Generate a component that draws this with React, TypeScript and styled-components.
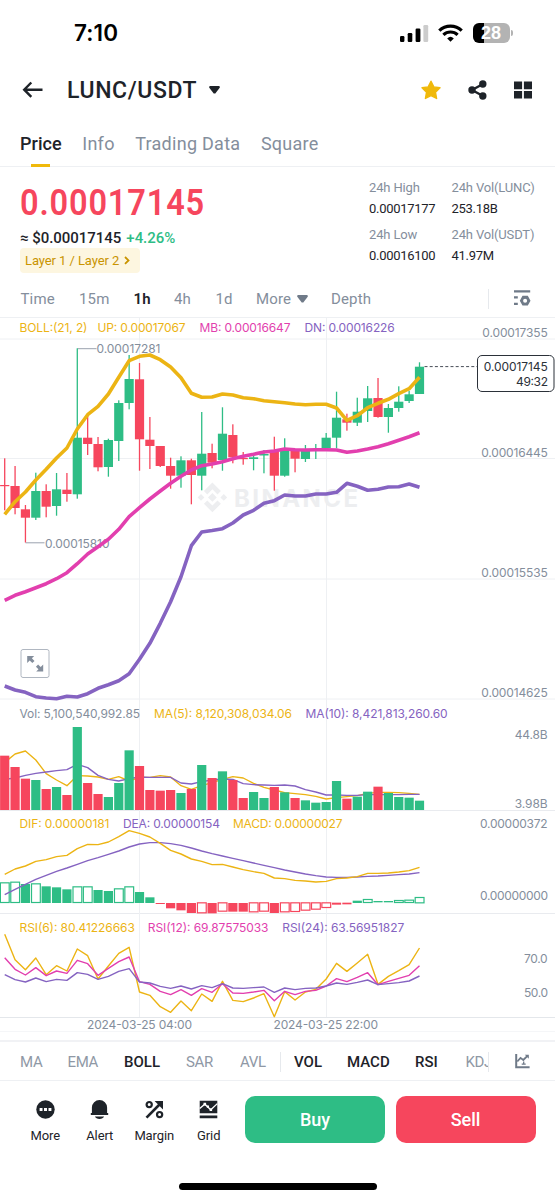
import React from "react";
import styled, { createGlobalStyle } from "styled-components";

const C = {
  ink: "#1e2329",
  gray: "#848e9c",
  line: "#eef0f3",
  green: "#2ebd85",
  red: "#f6465d",
  yellow: "#ecb414",
  pink: "#e23fae",
  purple: "#8563c1",
};

const Global = createGlobalStyle`
  * { box-sizing: border-box; }
  body { margin: 0; background: #fff; }
`;

const Screen = styled.main`
  width: 555px;
  height: 1200px;
  overflow: hidden;
  background: #fff;
  color: ${C.ink};
  font-family: Roboto, "Liberation Sans", sans-serif;
  display: flex;
  flex-direction: column;
`;

const StatusBar = styled.header`
  height: 66px;
  flex: none;
  padding: 0 42px 0 74px;
  display: flex;
  align-items: center;
  justify-content: space-between;
`;
const Clock = styled.span`
  font: 580 22.5px/24px Inter, sans-serif;
  color: #000;
  letter-spacing: 0.1px;
`;
const StatusIcons = styled.div`
  display: flex;
  align-items: center;
  height: 20px;
`;
const Battery = styled.div`
  width: 37px;
  height: 19.5px;
  margin-left: 10px;
  border-radius: 6px;
  background: linear-gradient(90deg, #000 10.5px, #b3b3b3 10.5px);
  color: #fff;
  text-align: center;
  font: 700 18px/20px "Liberation Sans", sans-serif;
`;
const BatteryTip = styled.i`
  width: 2px;
  height: 6px;
  margin-left: 1.5px;
  border-radius: 0 2px 2px 0;
  background: #b3b3b3;
`;

const TitleBar = styled.div`
  height: 48px;
  flex: none;
  padding: 0 23px 0 22px;
  display: flex;
  align-items: center;
`;
const Pair = styled.h1`
  margin: 2px 11.5px 0 24px;
  font-size: 23px;
  line-height: 28px;
  font-weight: 550;
  letter-spacing: 0.6px;
`;
const TitleActions = styled.div`
  margin-left: auto;
  display: flex;
  align-items: center;
  gap: 26.8px;
`;

const Tabs = styled.nav`
  height: 53px;
  flex: none;
  padding: 18px 20px 0;
  display: flex;
  gap: 20.5px;
  border-bottom: 1px solid ${C.line};
`;
const Tab = styled.span<{ $active?: boolean }>`
  height: 35px;
  font-size: 18px;
  line-height: 23px;
  font-weight: ${(p) => (p.$active ? 500 : 440)};
  letter-spacing: ${(p) => (p.$active ? 0.05 : 0.27)}px;
  color: ${(p) => (p.$active ? C.ink : C.gray)};
  display: flex;
  flex-direction: column;
  align-items: center;
  justify-content: space-between;
  &::after {
    content: "";
    width: 19px;
    height: 3.5px;
    background: ${(p) => (p.$active ? "#f0b90b" : "transparent")};
  }
`;

const Ticker = styled.section`
  height: 115px;
  flex: none;
  display: flex;
  padding: 10px 19px 0 20px;
  justify-content: space-between;
`;
const PriceColumn = styled.div`
  display: flex;
  flex-direction: column;
  align-items: flex-start;
`;
const LastPrice = styled.strong`
  font-size: 37px;
  line-height: 52px;
  font-weight: 600;
  letter-spacing: 0.95px;
  transform: scaleX(0.88);
  transform-origin: left center;
  color: ${C.red};
`;
const Fiat = styled.span`
  font-size: 15px;
  line-height: 18px;
  font-weight: 480;
  letter-spacing: -0.03px;
`;
const Change = styled.span`
  margin-left: 5px;
  color: ${C.green};
`;
const Tag = styled.span`
  margin-top: 1px;
  width: 120px;
  height: 25px;
  padding: 0 5px;
  border-radius: 4px;
  background: #fdf6e0;
  color: #c99400;
  font-size: 13px;
  letter-spacing: -0.08px;
  display: flex;
  align-items: center;
  gap: 4.5px;
  white-space: nowrap;
`;
const Stats = styled.dl`
  margin: 0;
  width: 167px;
  display: grid;
  grid-template-columns: 82.5px 1fr;
  grid-template-rows: 47px 47px;
`;
const Stat = styled.div`
  white-space: nowrap;
  font-size: 13px;
`;
const StatLabel = styled.dt`
  line-height: 22px;
  letter-spacing: -0.15px;
  color: ${C.gray};
`;
const StatValue = styled.dd`
  margin: 0;
  line-height: 20px;
  font-weight: 450;
  letter-spacing: -0.3px;
`;

const Periods = styled.nav`
  height: 35px;
  flex: none;
  padding: 0 24px 2px 20.5px;
  display: flex;
  align-items: center;
`;
const Period = styled.span<{ $w: number; $active?: boolean }>`
  flex: 0 0 ${(p) => p.$w}px;
  display: flex;
  align-items: center;
  gap: 6px;
  font-size: 15px;
  letter-spacing: 0.15px;
  font-weight: ${(p) => (p.$active ? 650 : 400)};
  color: ${(p) => (p.$active ? C.ink : C.gray)};
`;
const Divider = styled.i<{ $right?: number }>`
  width: 1px;
  height: 20px;
  margin-right: ${(p) => p.$right ?? 0}px;
  background: #e6e9ed;
`;

const Panel = styled.svg`
  display: block;
  flex: none;
  font-family: Inter, "Liberation Sans", sans-serif;
  font-size: 12px;
`;

const Indicators = styled.nav`
  height: 41px;
  flex: none;
  padding: 1px 24px 0 20px;
  border-top: 2px solid #f1f2f5;
  border-bottom: 1px solid ${C.line};
  display: flex;
  align-items: center;
`;
const Indicator = styled.span<{ $w: number; $active?: boolean }>`
  flex: 0 0 ${(p) => p.$w}px;
  overflow: hidden;
  font-size: 15px;
  line-height: 20px;
  letter-spacing: ${(p) => (p.$active ? 0 : -0.35)}px;
  font-weight: ${(p) => (p.$active ? 500 : 400)};
  color: ${(p) => (p.$active ? C.ink : "#8f98a5")};
`;

const ActionBar = styled.footer`
  flex: none;
  height: 62px;
  padding: 15px 19.5px 0 18px;
  display: flex;
`;
const Action = styled.div`
  width: 54.5px;
  display: flex;
  flex-direction: column;
  align-items: center;
  padding-top: 4px;
  gap: 7px;
  font-size: 13px;
  line-height: 20px;
  letter-spacing: -0.1px;

  svg {
    flex: none;
  }
`;
const TradeButton = styled.button<{ $sell?: boolean }>`
  width: 140px;
  height: 47px;
  margin-left: ${(p) => (p.$sell ? 10.5 : 9)}px;
  padding: 0;
  border: 0;
  border-radius: 10px;
  background: ${(p) => (p.$sell ? C.red : C.green)};
  color: #fff;
  font: 480 18px/24px Roboto, sans-serif;
`;
const HomeIndicator = styled.i`
  margin: 40px 0 0 178.5px;
  width: 198.5px;
  height: 7px;
  border-radius: 4px;
  background: #000;
`;

/* ---------- chart data, in chart pixel units ---------- */

const STEP = 10.37;
const cx = (i: number) => 4.7 + STEP * i;

// [colour, body top, body bottom, wick top, wick bottom]
type Candle = ["g" | "r", number, number, number, number];
const candles: Candle[] = [
  ["r", 485, 486.2, 458.3, 510.3], ["r", 486, 508, 466, 514.3], ["r", 509.3, 517.7, 505, 542.5],
  ["g", 491, 517.7, 472.7, 520], ["r", 491, 506.7, 484.3, 517.3], ["g", 489.3, 506, 473, 515.7],
  ["r", 489.7, 494, 473, 501.7], ["g", 437.7, 494.3, 348.3, 498.7], ["r", 437.7, 444, 416, 455],
  ["r", 444, 467.3, 437, 471.3], ["g", 440, 467, 438.7, 476.7], ["g", 403, 441, 400.3, 461],
  ["g", 379, 403, 355, 409.3], ["r", 379.3, 439.3, 363, 470.7], ["r", 439.7, 446, 417, 469],
  ["r", 446, 466, 446, 467], ["r", 466, 475.7, 457.7, 488.7], ["g", 460.3, 475.7, 456.3, 487.7],
  ["r", 460.3, 475, 458.7, 504.3], ["g", 453.7, 475.7, 412, 490.3], ["r", 453, 462.7, 443.7, 468.3],
  ["g", 433.7, 460, 407.3, 470.7], ["r", 435, 457.3, 424.3, 463.3], ["r", 458, 459.2, 452, 464.7],
  ["g", 457.3, 459, 454, 470.3], ["g", 454, 455.5, 450, 473.3], ["r", 450.7, 475.7, 436.7, 490.7],
  ["g", 450.7, 475.7, 438.3, 476.7], ["r", 450.7, 458.7, 450, 472.3], ["g", 450.7, 459, 445, 462],
  ["g", 449.5, 450.7, 444, 459], ["g", 437.7, 448.3, 433, 449.3], ["g", 417.7, 437.7, 391.7, 448.3],
  ["r", 419.3, 422.7, 413.7, 430.7], ["g", 411.7, 422.7, 397.7, 426], ["g", 398.3, 411, 386, 422],
  ["r", 398, 417, 378, 417.7], ["g", 408, 417, 404, 432.7], ["g", 401.7, 408, 386.3, 411.7],
  ["g", 394.3, 401, 390.7, 403], ["g", 366.7, 394, 362.3, 394],
];

const upper = [514.3, 501.7, 492, 480, 469.3, 458, 448, 429, 414.7, 406.3, 394, 377.3, 360.7, 356.3, 355, 359.7, 367, 377.7, 393.3, 397.3, 397, 394, 395, 397.7, 398.7, 400.7, 401.7, 402.7, 404, 404.7, 404.3, 404.3, 408, 420.3, 415.7, 407.7, 403.3, 399.3, 393.7, 388.7, 377.3];
const middle = [600.3, 595.3, 591.7, 587.7, 583.7, 578.7, 572.7, 563.7, 554, 546.7, 539.3, 529.3, 516.7, 507.7, 499, 491, 483.3, 476.3, 470, 465.7, 464, 461.7, 458.7, 456.3, 454.3, 452, 451, 449, 449.7, 450, 449.7, 449.7, 450, 452.3, 451, 449, 446.7, 443.7, 440.3, 436.7, 432.7];
const lower = [686, 690, 692.3, 696.7, 698, 698.7, 696.3, 697, 693.7, 688.3, 684.7, 680.7, 673.7, 659.3, 643.3, 623.3, 601.7, 576.7, 545.7, 532, 530.5, 528.7, 523, 515, 510.3, 503.3, 500.7, 495, 496, 496, 494, 494, 492.3, 483.3, 486.3, 490.3, 489.3, 487, 486.7, 484, 487.3];

// Lower panels are stored in thirds of a pixel from the panel's own origin.
const third = (origin: number, v: number[]) => v.map((n) => origin + n / 3);

const volume = third(700, [167, 201, 236, 240, 267, 261, 285, 81, 249, 282, 291, 249, 151, 198, 270, 272, 270, 279, 267, 195, 234, 214, 240, 294, 276, 294, 261, 277, 294, 301, 308, 306, 243, 296, 290, 275, 260, 279, 291, 293, 302]);
const volMa5 = third(700, [187, 162, 153, 180, 221, 240, 257, 227, 228, 231, 238, 230, 243, 232, 232, 227, 231, 257, 268, 257, 248, 238, 230, 234, 250, 262, 270, 278, 281, 284, 289, 297, 293, 290, 287, 280, 277, 277, 278, 280, 283]);
const volMa10 = third(700, [238, 234, 226, 220, 216, 212, 209, 193, 203, 226, 238, 243, 236, 231, 232, 232, 232, 249, 252, 245, 240, 237, 238, 251, 254, 255, 256, 255, 258, 269, 276, 285, 285, 286, 286, 284, 284, 284, 284, 283, 283]);

const dif = third(810, [193, 177, 168, 154, 149, 140, 136, 116, 103, 104, 96, 80, 62, 70, 81, 100, 121, 132, 147, 154, 164, 163, 171, 179, 185, 190, 204, 206, 211, 213, 216, 214, 206, 204, 200, 190, 190, 189, 186, 182, 172]);
const dea = third(810, [254, 238, 223, 208, 196, 184, 174, 163, 152, 143, 133, 123, 111, 102, 98, 98, 101, 106, 114, 123, 131, 138, 145, 152, 159, 166, 173, 180, 186, 192, 197, 201, 202, 202, 201, 199, 198, 196, 194, 192, 188]);

// [top, bottom, hollow]
type Hist = [number, number, 0 | 1];
const hist: Hist[] = [
  [217, 279, 1], [215, 279, 1], [222, 279, 0], [220, 279, 1], [229, 279, 0], [232, 279, 0], [238, 279, 0],
  [229, 279, 1], [229, 279, 1], [240, 279, 0], [243, 279, 0], [235, 279, 1], [229, 279, 1], [246, 279, 0],
  [262, 279, 0], [279, 282, 0], [279, 295, 0], [279, 301, 0], [279, 309, 0], [277, 310, 1], [279, 310, 0],
  [277, 305, 1], [279, 305, 0], [279, 305, 0], [277, 307, 1], [277, 305, 1], [279, 309, 0], [277, 307, 1],
  [277, 306, 1], [277, 302, 1], [277, 299, 1], [277, 294, 1], [278, 284, 0], [278, 283, 0], [272, 279, 0],
  [267, 279, 1], [273, 277, 0], [273, 277, 0], [270, 279, 1], [269, 279, 1], [261, 280, 1],
];

const rsi6 = third(915, [58, 134, 164, 129, 179, 152, 168, 102, 122, 192, 153, 115, 97, 231, 241, 275, 292, 258, 287, 237, 259, 199, 256, 260, 249, 236, 305, 230, 255, 231, 223, 192, 145, 169, 144, 118, 208, 184, 167, 149, 99]);
const rsi12 = third(915, [128, 163, 180, 158, 182, 168, 175, 136, 146, 181, 160, 140, 126, 200, 208, 229, 239, 224, 241, 221, 232, 206, 234, 235, 231, 226, 257, 229, 239, 229, 226, 213, 191, 200, 187, 173, 209, 199, 190, 181, 152]);
const rsi24 = third(915, [179, 194, 201, 189, 200, 193, 196, 173, 178, 193, 184, 169, 161, 201, 204, 214, 220, 213, 222, 212, 218, 206, 219, 220, 218, 216, 232, 219, 224, 220, 219, 213, 204, 208, 202, 195, 209, 206, 203, 198, 183]);

/* ---------- chart parts ---------- */

const Series = ({ data, color, w = 1.4 }: { data: number[]; color: string; w?: number }) => (
  <polyline
    points={data.map((y, i) => `${cx(i).toFixed(2)},${y.toFixed(2)}`).join(" ")}
    fill="none"
    stroke={color}
    strokeWidth={w}
    strokeLinejoin="round"
  />
);

const Label = ({ x, x2, y, fill = C.gray, children }: { x: number; x2: number; y: number; fill?: string; children: string }) => (
  <text x={x} y={y} textLength={x2 - x} fill={fill}>
    {children}
  </text>
);

const VLines = ({ y1, y2 }: { y1: number; y2: number }) => (
  <path d={`M139.5 ${y1}V${y2}M326.5 ${y1}V${y2}`} stroke={C.line} fill="none" />
);

const tone = (i: number) => (candles[i][0] === "g" ? C.green : C.red);

const PriceChart = () => (
  <Panel width="555" height="387" viewBox="0 317 555 387">
    <path d="M0 317.5H555M0 339H555M0 458.5H555M0 579H555M0 699H555" stroke={C.line} fill="none" />
    <VLines y1={317} y2={704} />
    <g fill="#edeef0">
      <path d="M212.4 482.5l8.5 8.5-3.4 3.4-5.1-5.1-5.1 5.1-3.4-3.4zM212.4 512.3l8.5-8.5-3.4-3.4-5.1 5.1-5.1-5.1-3.4 3.4zM212.4 493l4.4 4.4-4.4 4.4-4.4-4.4zM201 494l3.4 3.4-3.4 3.4-3.4-3.4zM223.8 494l3.4 3.4-3.4 3.4-3.4-3.4z" />
      <text x="234" y="506.7" fontSize="24" fontWeight="700" textLength="124">BINANCE</text>
    </g>
    <path d="M77.5 348.7H96.5M25.5 542.8H44.5" stroke="#9aa2ae" fill="none" />
    <Label x={96.5} x2={160.5} y={353.4}>0.00017281</Label>
    <Label x={45} x2={109.5} y={547.9}>0.00015810</Label>
    {candles.map(([, top, bottom, hi, lo], i) => (
      <g key={i} fill={tone(i)}>
        <rect x={cx(i) - 0.65} y={hi} width="1.3" height={lo - hi} />
        <rect x={cx(i) - 4.6} y={top} width="9.2" height={bottom - top} />
      </g>
    ))}
    <Series data={upper} color={C.yellow} w={3.6} />
    <Series data={middle} color={C.pink} w={3.6} />
    <Series data={lower} color={C.purple} w={3.6} />
    <path d="M424.5 366.6H477" stroke="#474d57" strokeDasharray="3 2.2" fill="none" />
    <rect x="477.5" y="355.5" width="76.5" height="36" rx="4.5" fill="#fff" stroke="#2b3139" />
    <Label x={483.7} x2={547.8} y={371.4} fill="#2b3139">0.00017145</Label>
    <Label x={516} x2={548} y={385.8} fill="#2b3139">49:32</Label>
    <Label x={19.5} x2={87.5} y={332} fill={C.yellow}>BOLL:(21, 2)</Label>
    <Label x={97.5} x2={185.5} y={332} fill={C.yellow}>UP: 0.00017067</Label>
    <Label x={199.5} x2={290.5} y={332} fill={C.pink}>MB: 0.00016647</Label>
    <Label x={304.5} x2={394.7} y={332} fill={C.purple}>DN: 0.00016226</Label>
    <Label x={482.3} x2={547.8} y={336.8}>0.00017355</Label>
    <Label x={481.3} x2={547.8} y={457}>0.00016445</Label>
    <Label x={481.3} x2={547.8} y={577}>0.00015535</Label>
    <Label x={481.3} x2={547.8} y={697}>0.00014625</Label>
    <rect x="21" y="649.5" width="28" height="28" rx="2" fill="#fff" stroke="#b0b7c1" />
    <g fill={C.gray}>
      <path d="M27.2 656h7l-2.3 2.3 2.6 2.6-2.2 2.2-2.6-2.6-2.5 2.5zM43.2 671.6h-7l2.3-2.3-2.6-2.6 2.2-2.2 2.6 2.6 2.5-2.5z" />
    </g>
  </Panel>
);

const VolumeChart = () => (
  <Panel width="555" height="106" viewBox="0 704 555 106">
    <VLines y1={704} y2={810} />
    <Series data={volMa5} color={C.yellow} />
    <Series data={volMa10} color={C.purple} />
    {volume.map((y, i) => (
      <rect key={i} x={cx(i) - 4.6} y={y} width="9.2" height={810 - y} fill={tone(i)} />
    ))}
    <Label x={19.5} x2={140} y={718.3}>Vol: 5,100,540,992.85</Label>
    <Label x={154} x2={292} y={718.3} fill={C.yellow}>MA(5): 8,120,308,034.06</Label>
    <Label x={305.5} x2={447.7} y={718.3} fill={C.purple}>MA(10): 8,421,813,260.60</Label>
    <Label x={514.7} x2={547.6} y={739}>44.8B</Label>
    <Label x={514.7} x2={547.6} y={807.8}>3.98B</Label>
  </Panel>
);

const MacdChart = () => (
  <Panel width="555" height="104" viewBox="0 810 555 104">
    <path d="M0 810.5H555M0 913.5H555" stroke="#e9ebef" fill="none" />
    <VLines y1={810} y2={914} />
    {hist.map(([a, b, hollow], i) => {
      const color = i < 15 || i > 33 ? C.green : C.red;
      const y = 810 + a / 3;
      const h = (b - a) / 3;
      return hollow ? (
        <rect key={i} x={cx(i) - 4.3} y={y + 0.5} width="8.8" height={h - 1} fill="#fff" stroke={color} strokeWidth="1.2" />
      ) : (
        <rect key={i} x={cx(i) - 4.6} y={y} width="9.2" height={h} fill={color} />
      );
    })}
    <Series data={dea} color={C.purple} />
    <Series data={dif} color={C.yellow} />
    <Label x={19.5} x2={109.5} y={828.3} fill={C.yellow}>DIF: 0.00000181</Label>
    <Label x={123} x2={220} y={828.3} fill={C.purple}>DEA: 0.00000154</Label>
    <Label x={233} x2={342.5} y={828.3} fill={C.yellow}>MACD: 0.00000027</Label>
    <Label x={480} x2={547.6} y={828.3}>0.00000372</Label>
    <Label x={480} x2={548.2} y={900.3}>0.00000000</Label>
  </Panel>
);

const RsiChart = () => (
  <Panel width="555" height="126" viewBox="0 914 555 126">
    <path d="M0 1017.5H555" stroke="#e4e7eb" fill="none" />
    <path d="M0 1031.5H555" stroke="#f5f6f8" fill="none" />
    <VLines y1={914} y2={1017} />
    <Series data={rsi6} color={C.yellow} />
    <Series data={rsi12} color={C.pink} />
    <Series data={rsi24} color={C.purple} />
    <Label x={19.5} x2={134.8} y={932} fill={C.yellow}>RSI(6): 80.41226663</Label>
    <Label x={147.8} x2={268.5} y={932} fill={C.pink}>RSI(12): 69.87575033</Label>
    <Label x={282.3} x2={404.2} y={932} fill={C.purple}>RSI(24): 63.56951827</Label>
    <Label x={524} x2={547.6} y={963.3}>70.0</Label>
    <Label x={524} x2={548} y={997}>50.0</Label>
    <Label x={87} x2={192} y={1029.3}>2024-03-25 04:00</Label>
    <Label x={273.5} x2={378} y={1029.3}>2024-03-25 22:00</Label>
  </Panel>
);

/* ---------- icons ---------- */

const Signal = () => (
  <svg width="29" height="19" viewBox="0 0 29 19">
    <rect x="0" y="12" width="4.4" height="6" rx="1.2" />
    <rect x="7.7" y="9" width="4.6" height="9" rx="1.2" />
    <rect x="15.6" y="4.5" width="4.8" height="13.5" rx="1.2" />
    <rect x="23.4" y="1" width="4.8" height="17" rx="1.2" fill="#ccc" />
  </svg>
);
const WifiSvg = styled.svg`
  margin-left: 9px;
`;
const Wifi = () => (
  <WifiSvg width="25" height="18" viewBox="0 0 25 18" fill="none" stroke="#000" strokeWidth="3.2">
    <path d="M1.3 6.6a16 16 0 0 1 22.4 0" />
    <path d="M5.4 10.9a10.2 10.2 0 0 1 14.2 0" />
    <path d="M12.5 17.7l-3.3-3.3a4.8 4.8 0 0 1 6.6 0z" fill="#000" stroke="none" />
  </WifiSvg>
);
const BackArrow = () => (
  <svg width="21" height="18" viewBox="0 0 21 18" fill="none" stroke={C.ink} strokeWidth="2.4">
    <path d="M2.3 8.7H20.5M9.3 1.5L2.2 8.7l7.1 7.2" />
  </svg>
);
const Caret = ({ color = C.ink }: { color?: string }) => (
  <svg width="11" height="8" viewBox="0 0 11 8">
    <path d="M.6 0h9.8l.5 1.5L6.3 7.6H4.7L.1 1.5z" fill={color} />
  </svg>
);
const Star = () => (
  <svg width="20" height="20" viewBox="0 0 20 20">
    <path d="M10 1.2l2.8 5.7 6.2.9-4.5 4.5 1.1 6.2-5.6-2.9-5.6 2.9 1.1-6.2L1 7.8l6.2-.9z" fill="#f0b90b" stroke="#f0b90b" strokeWidth="1.4" strokeLinejoin="round" />
  </svg>
);
const Share = () => (
  <svg width="19" height="20" viewBox="0 0 19 20" fill={C.ink}>
    <path d="M15 4L4 10l11 6" fill="none" stroke={C.ink} strokeWidth="2.4" />
    <circle cx="14.8" cy="4" r="3.7" />
    <circle cx="4" cy="10" r="3.7" />
    <circle cx="14.8" cy="16" r="3.7" />
  </svg>
);
const Squares = () => (
  <svg width="18" height="18" viewBox="0 0 18 18" fill={C.ink}>
    <path d="M0 .5h8.1v7.7H0zM9.9.5H18v7.7H9.9zM0 9.9h8.1v7.6H0zM9.9 9.9H18v7.6H9.9z" />
  </svg>
);
const ChartSettings = () => (
  <svg width="17" height="17" viewBox="0 0 17 17" fill="#6f7a88">
    <path d="M0 .3h16.2v2.3H0zM0 6.3h3.8v2.2H0zM0 12.8h3.8V15H0z" />
    <path fillRule="evenodd" d="M8.5 5.8h5.3l2.7 4.9-2.7 4.9H8.5l-2.7-4.9zM11.1 8.7a2 2 0 1 0 .01 4 2 2 0 0 0 0-4z" />
  </svg>
);
const Chevron = () => (
  <svg width="6" height="9" viewBox="0 0 6 9" fill="none" stroke="#c99400" strokeWidth="1.8">
    <path d="M1 1l3.5 3.4L1 7.8" />
  </svg>
);
const TrendEdit = () => (
  <svg width="15" height="15" viewBox="0 0 15 15" fill="none" stroke="#6f7a88" strokeWidth="2">
    <path d="M1.2 0V13.3H14.6" />
    <path d="M2.3 7.5l3.2-3.6 2.8 2.1 4.4-4.4" strokeWidth="1.8" />
    <path d="M9.8.7h4v4z" fill="#6f7a88" stroke="none" />
    <path d="M8.7 7.5v2.6M6.7 10.2h4" strokeWidth="1.3" />
  </svg>
);
const MoreDots = () => (
  <svg width="19" height="19" viewBox="0 0 19 19">
    <circle cx="9.5" cy="9.5" r="9.2" fill={C.ink} />
    <path d="M3.6 8.1h2.9v2.9H3.6zM8 8.1h3V11H8zM12.5 8.1h2.9v2.9h-2.9z" fill="#fff" />
  </svg>
);
const Bell = () => (
  <svg width="19" height="19" viewBox="0 0 19 19" fill={C.ink}>
    <path d="M1.9 12.9V7.6a7.6 7.6 0 0 1 15.2 0v5.3h1.1v2H.8v-2zM4.9 16.5h9.2c-.6 1.4-2.4 2.4-4.6 2.4s-4-1-4.6-2.4z" />
  </svg>
);
const MarginPct = () => (
  <svg width="19" height="19" viewBox="0 0 19 19" fill="none" stroke={C.ink} strokeWidth="2.2">
    <circle cx="4.2" cy="4.6" r="2.6" />
    <circle cx="14.6" cy="14.6" r="2.6" />
    <path d="M1.5 17.6L15 4" strokeWidth="2.6" />
    <path d="M9.6 1h8.4v8.4z" fill={C.ink} stroke="none" />
  </svg>
);
const GridBot = () => (
  <svg width="19" height="19" viewBox="0 0 19 19">
    <path d="M.7.8h17.6v12.4H.7zM.7 15.4h17.6v2.8H.7z" fill={C.ink} />
    <path d="M.7 8.6L5.8 4.2l6 5.6 6.5-6.2" stroke="#fff" strokeWidth="1.3" fill="none" />
    <path d="M4.5 2.8h2.6v2.6H4.5zM7.8 5.6h2.2v2.2H7.8zM10.6 8.6h2.5v2.5h-2.5z" fill="#fff" />
  </svg>
);

const stats = [
  ["24h High", "0.00017177"],
  ["24h Vol(LUNC)", "253.18B"],
  ["24h Low", "0.00016100"],
  ["24h Vol(USDT)", "41.97M"],
];

export default function App() {
  return (
    <Screen>
      <Global />
      <StatusBar>
        <Clock>7:10</Clock>
        <StatusIcons>
          <Signal />
          <Wifi />
          <Battery>28</Battery>
          <BatteryTip />
        </StatusIcons>
      </StatusBar>

      <TitleBar>
        <BackArrow />
        <Pair>LUNC/USDT</Pair>
        <Caret />
        <TitleActions>
          <Star />
          <Share />
          <Squares />
        </TitleActions>
      </TitleBar>

      <Tabs>
        <Tab $active>Price</Tab>
        <Tab>Info</Tab>
        <Tab>Trading Data</Tab>
        <Tab>Square</Tab>
      </Tabs>

      <Ticker>
        <PriceColumn>
          <LastPrice>0.00017145</LastPrice>
          <Fiat>
            ≈ $0.00017145<Change>+4.26%</Change>
          </Fiat>
          <Tag>
            Layer 1 / Layer 2 <Chevron />
          </Tag>
        </PriceColumn>
        <Stats>
          {stats.map(([k, v]) => (
            <Stat key={k}>
              <StatLabel>{k}</StatLabel>
              <StatValue>{v}</StatValue>
            </Stat>
          ))}
        </Stats>
      </Ticker>

      <Periods>
        <Period $w={58.5}>Time</Period>
        <Period $w={54.5}>15m</Period>
        <Period $w={40.5} $active>1h</Period>
        <Period $w={41.5}>4h</Period>
        <Period $w={40.5}>1d</Period>
        <Period $w={75}>
          More <Caret color="#6f7a88" />
        </Period>
        <Period $w={157}>Depth</Period>
        <Divider $right={25} />
        <ChartSettings />
      </Periods>

      <PriceChart />
      <VolumeChart />
      <MacdChart />
      <RsiChart />

      <Indicators>
        <Indicator $w={47.5}>MA</Indicator>
        <Indicator $w={56.5}>EMA</Indicator>
        <Indicator $w={62} $active>BOLL</Indicator>
        <Indicator $w={54}>SAR</Indicator>
        <Indicator $w={40}>AVL</Indicator>
        <Divider $right={13} />
        <Indicator $w={53} $active>VOL</Indicator>
        <Indicator $w={68} $active>MACD</Indicator>
        <Indicator $w={50.5} $active>RSI</Indicator>
        <Indicator $w={22.5}>KDJ</Indicator>
        <Divider $right={26} />
        <TrendEdit />
      </Indicators>

      <ActionBar>
        <Action>
          <MoreDots />
          More
        </Action>
        <Action>
          <Bell />
          Alert
        </Action>
        <Action>
          <MarginPct />
          Margin
        </Action>
        <Action>
          <GridBot />
          Grid
        </Action>
        <TradeButton>Buy</TradeButton>
        <TradeButton $sell>Sell</TradeButton>
      </ActionBar>
      <HomeIndicator />
    </Screen>
  );
}
